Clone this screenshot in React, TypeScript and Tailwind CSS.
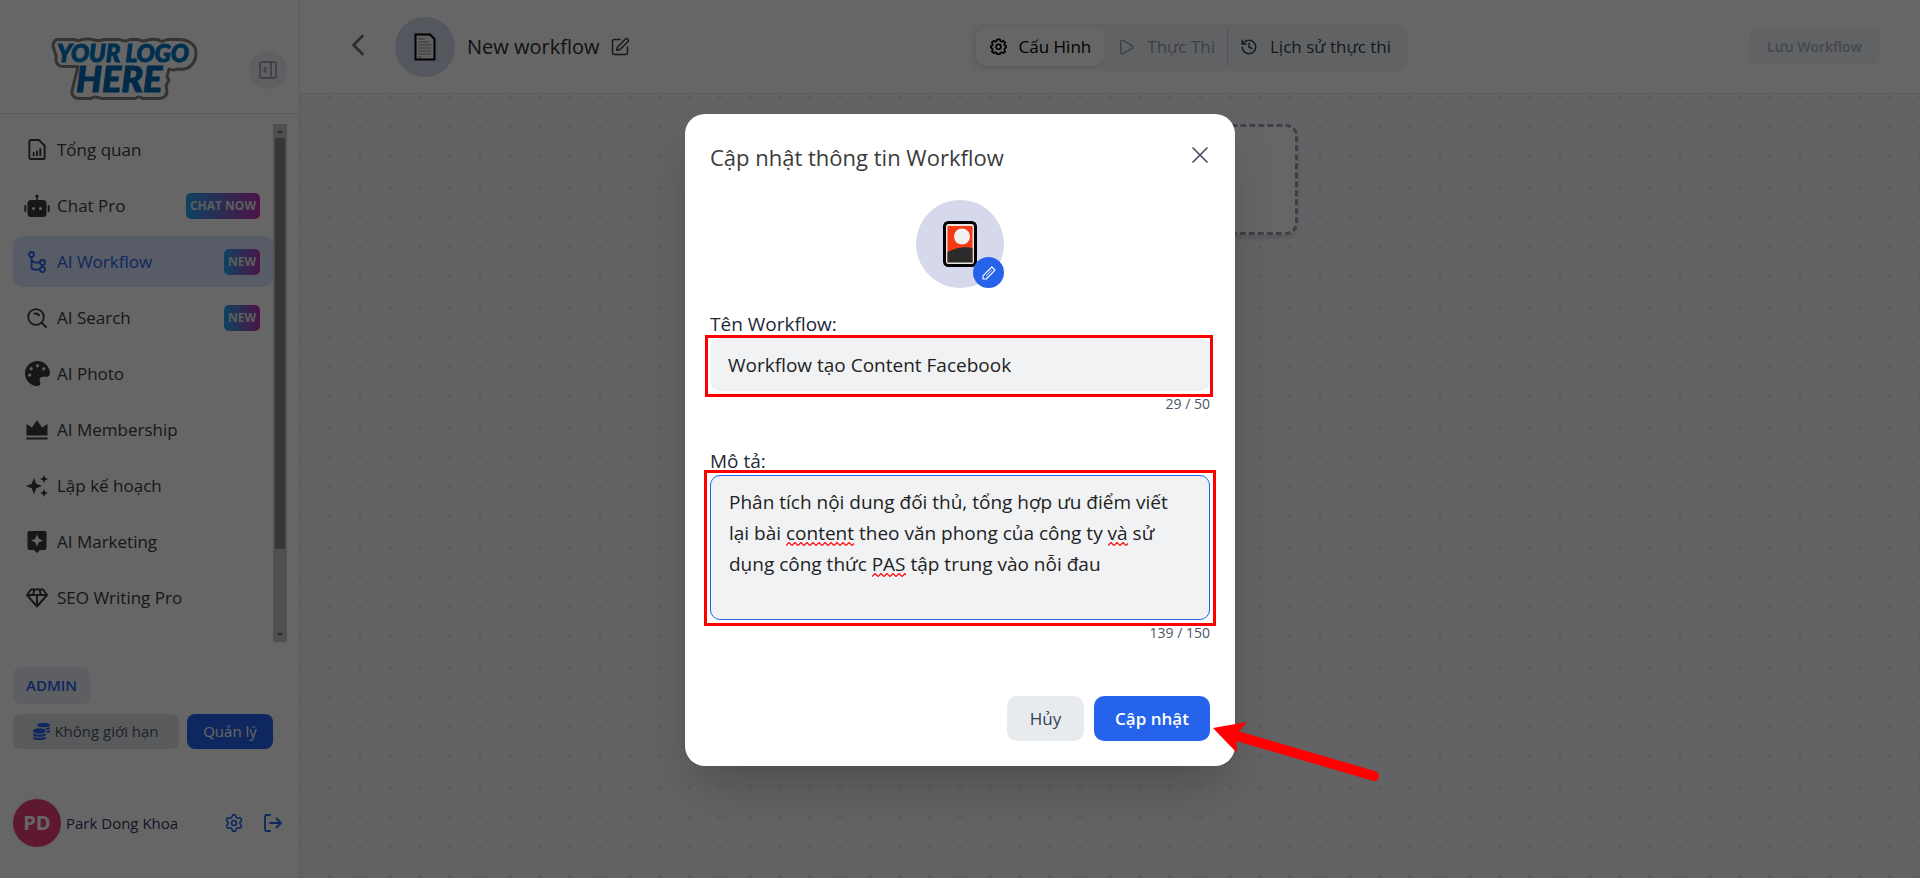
import type { ComponentType, ReactNode } from 'react';
import { useState } from 'react';
import {
  ChevronLeft,
  Play,
  Settings,
  SquarePen,
  X,
} from 'lucide-react';
import { FaCoins, FaPalette } from 'react-icons/fa';
import { LuHistory } from 'react-icons/lu';

type IconProps = { className?: string };

const ReportIcon = ({ className }: IconProps) => (
  <svg viewBox="0 0 18 22" className={className} fill="none" stroke="currentColor" strokeWidth="2" strokeLinejoin="round" strokeLinecap="round">
    <path d="M3 1h8l6 6v12a2 2 0 0 1-2 2H3a2 2 0 0 1-2-2V3a2 2 0 0 1 2-2z" />
    <path d="M5.500 14.500v2.500M9 13v4M12.500 10.500v6.500" />
  </svg>
);

const RobotIcon = ({ className }: IconProps) => (
  <svg viewBox="0 0 26 24" className={className} fill="currentColor" fillRule="evenodd">
    <path d="M7 6h12a3.500 3.500 0 0 1 3.500 3.500v10A3.500 3.500 0 0 1 19 23H7a3.500 3.500 0 0 1-3.500-3.500v-10A3.500 3.500 0 0 1 7 6zM9.500 13a1.500 1.500 0 1 0 0 3 1.500 1.500 0 0 0 0-3zM16.500 13a1.500 1.500 0 1 0 0 3 1.500 1.500 0 0 0 0-3z" />
    <path d="M12.200 3h1.600v4h-1.600z" />
    <circle cx="13" cy="2.200" r="1.600" />
    <rect x=".3" y="11" width="2" height="7" rx="1" />
    <rect x="23.700" y="11" width="2" height="7" rx="1" />
  </svg>
);

const BranchIcon = ({ className }: IconProps) => (
  <svg viewBox="0 0 18 22" className={className} fill="none" stroke="currentColor" strokeWidth="1.8">
    <circle cx="3.500" cy="3.500" r="2.500" />
    <circle cx="14.500" cy="11.500" r="2.500" />
    <circle cx="14.500" cy="18.500" r="2.500" />
    <path d="M3.500 6v9.500a3 3 0 0 0 3 3H12M3.500 7.500a4 4 0 0 0 4 4H12" />
  </svg>
);

const SearchIcon = ({ className }: IconProps) => (
  <svg viewBox="0 0 20 20" className={className} fill="none" stroke="currentColor" strokeWidth="1.8" strokeLinecap="round">
    <circle cx="9" cy="9" r="7.800" />
    <path d="M15 15l4 4M7.500 5.700A4 4 0 0 1 12 7.500" />
  </svg>
);

const CrownIcon = ({ className }: IconProps) => (
  <svg viewBox="0 0 22 20" className={className} fill="currentColor">
    <path d="M.5 4l5.500 3.500L11 0l5 7.500L21.500 4v11.500H.5z" />
    <path d="M.5 17.500h21v2H.5z" />
  </svg>
);

const SparklesIcon = ({ className }: IconProps) => (
  <svg viewBox="0 0 22 22" className={className} fill="currentColor">
    <path d="M8 3l2.300 5.700L16 11l-5.700 2.300L8 19l-2.300-5.700L0 11l5.700-2.300z" />
    <path d="M18 0l1.200 2.800L22 4l-2.800 1.200L18 8l-1.200-2.800L14 4l2.800-1.200zM18 14l1.200 2.800L22 18l-2.800 1.200L18 22l-1.200-2.800L14 18l2.800-1.200z" />
  </svg>
);

const MarketingIcon = ({ className }: IconProps) => (
  <svg viewBox="0 0 20 22" className={className} fill="currentColor" fillRule="evenodd">
    <path d="M2.500 0h15a2 2 0 0 1 2 2v15a2 2 0 0 1-2 2H13l-3 3-3-3H2.500a2 2 0 0 1-2-2V2a2 2 0 0 1 2-2zM10 3.500L8.200 7.700 4 9.500l4.200 1.800L10 15.500l1.800-4.200L16 9.500l-4.200-1.800z" />
  </svg>
);

const DiamondIcon = ({ className }: IconProps) => (
  <svg viewBox="0 0 22 20" className={className} fill="none" stroke="currentColor" strokeWidth="2" strokeLinejoin="round">
    <path d="M5 1.500h12l4 5.500-10 11.500L1 7zM1 7h20M8.500 1.500L7 7M15 7l-1.500-5.500M11 7v11" />
  </svg>
);

const PanelIcon = ({ className }: IconProps) => (
  <svg viewBox="0 0 18 18" className={className} fill="none" stroke="currentColor" strokeWidth="1.800" strokeLinejoin="round" strokeLinecap="round">
    <rect x="1" y="1" width="16" height="16" rx="1.500" />
    <path d="M12 1v16M7 7L5 9l2 2" />
  </svg>
);

const GearIcon = ({ className }: IconProps) => (
  <svg viewBox="0 0 18 18" className={className} fill="none" stroke="currentColor" strokeWidth="1.800" strokeLinejoin="round">
    <path d="M7.500 1.400h3l.5 1.900 1.400.6 1.700-1 2 2-1 1.700.6 1.400 1.300.4v2l-1.300.5-.6 1.500 1 1.700-2 2-1.700-1-1.400.6-.5 1.400h-3L7 15.700l-1.400-.6-1.700 1-2-2 1-1.700-.6-1.500L1 10.400v-2L2.300 8l.6-1.400-1-1.700 2-2 1.700 1L7 3.300z" />
    <circle cx="9" cy="9.300" r="2.600" />
  </svg>
);

const LogoutIcon = ({ className }: IconProps) => (
  <svg viewBox="0 0 18 18" className={className} fill="none" stroke="currentColor" strokeWidth="1.800" strokeLinecap="round" strokeLinejoin="round">
    <path d="M6 1H2.500A1.500 1.500 0 0 0 1 2.500v13A1.500 1.500 0 0 0 2.500 17H6M6 9h11M12.500 4.500L17 9l-4.500 4.500" />
  </svg>
);

const PencilIcon = ({ className }: IconProps) => (
  <svg viewBox="0 0 14 14" className={className} fill="none" stroke="currentColor" strokeWidth="1.200" strokeLinejoin="round" strokeLinecap="round">
    <path d="M1 13V9.800L9.800 1 13 4.200 4.200 13z" />
    <path d="M4.500 9.500l5-5" strokeWidth=".8" />
  </svg>
);

const Logo = () => (
  <svg viewBox="0 0 148 64" className="h-16 w-[148px]" role="img" aria-label="Your logo here">
    <path
      d="M6 2.500h17q4 2 8 0 8-1.500 14 1 4 .5 8-1h16q5 3 10 0h8q5 2.500 10 .5 8-2 14 1.500 6-3 14-2 14-1 19 8 3 10-3 17-5 6-14 4.500-5 2-9 0-1 4-2 8l2 3-3 6 1 5q0 7-8 7.500H92q-4-3-8 0H50q-6-3-10 0H28q-8-.5-7-8l6-24H12q-6 0-7-6V19L2 9q0-5 4-6.500z"
      fill="#fff"
      stroke="#857f78"
      strokeWidth="3"
      strokeLinejoin="round"
    />
    <text fontFamily="Lato, sans-serif" fontWeight="900" fontStyle="italic" strokeWidth="1">
      <tspan x="6" y="25" fontSize="24" fill="#0077c8" stroke="#0077c8">YOUR LOGO</tspan>
      <tspan x="25" y="55" fontSize="36" fill="#0069b4" stroke="#0069b4">HERE</tspan>
    </text>
  </svg>
);

const DocumentIcon = () => (
  <svg viewBox="0 0 22 28" className="h-7 w-[22px]">
    <path d="M1.500 1.500h14.500l4.500 4.500v20.500h-19z" fill="#f0f0f0" stroke="#000" strokeWidth="2" />
    <path d="M4 6h7M4 9h11M4 12h13M4 15h13M4 18h13M4 21h13M4 24h4" stroke="#8a8a8a" strokeWidth="1" />
  </svg>
);

const CardIcon = () => (
  <svg viewBox="0 0 34 46" className="h-[46px] w-[34px]">
    <rect x="1.500" y="1.500" width="31" height="43" rx="4" fill="#e8e4df" stroke="#000" strokeWidth="3" />
    <path d="M4.500 5h25v36h-25z" fill="#f43b16" />
    <path d="M4.500 31c6-3 15-6 25-4v14.500h-25z" fill="#2b2b2b" />
    <circle cx="19" cy="15.500" r="8" fill="#f0f0f0" />
  </svg>
);

interface NavItem {
  label: string;
  icon: ComponentType<IconProps>;
  iconClass: string;
  badge?: string;
  active?: boolean;
}

const navItems: NavItem[] = [
  { label: 'Tổng quan', icon: ReportIcon, iconClass: 'h-[21px] w-[18px]' },
  { label: 'Chat Pro', icon: RobotIcon, iconClass: 'h-6 w-[26px]', badge: 'CHAT NOW' },
  { label: 'AI Workflow', icon: BranchIcon, iconClass: 'h-[22px] w-[18px]', badge: 'NEW', active: true },
  { label: 'AI Search', icon: SearchIcon, iconClass: 'size-5', badge: 'NEW' },
  { label: 'AI Photo', icon: FaPalette, iconClass: 'size-[25px]' },
  { label: 'AI Membership', icon: CrownIcon, iconClass: 'h-5 w-[22px]' },
  { label: 'Lập kế hoạch', icon: SparklesIcon, iconClass: 'size-[22px]' },
  { label: 'AI Marketing', icon: MarketingIcon, iconClass: 'h-[22px] w-5' },
  { label: 'SEO Writing Pro', icon: DiamondIcon, iconClass: 'h-5 w-[22px]' },
];

const Sidebar = () => (
  <aside className="flex w-[300px] shrink-0 flex-col border-r border-[#e3e3e3] bg-white">
    <div className="flex h-[114px] items-end justify-between border-b border-[#e0e0e0] pr-3 pb-3 pl-[51px]">
      <Logo />
      <button aria-label="Thu gọn" className="mb-3 flex size-[38px] items-center justify-center rounded-full bg-[#eff1f6] text-gray-400">
        <PanelIcon className="size-[18px]" />
      </button>
    </div>

    <div className="mt-[10px] mr-3 ml-[13px] flex h-[518px]">
      <nav className="flex flex-1 flex-col gap-[5px]">
        {navItems.map(({ label, icon: Icon, iconClass, badge, active }) => (
          <a
            key={label}
            href="#"
            className={`flex h-[51px] shrink-0 items-center rounded-[10px] pr-[13px] pl-[10px] text-[17px] ${
              active ? 'bg-[#dbe6fe] text-[#2563eb]' : 'text-[#3b3b3b]'
            }`}
          >
            <span className="mr-[6px] flex w-7 justify-center">
              <Icon className={iconClass} />
            </span>
            {label}
            {badge && (
              <span className="ml-auto flex h-[26px] items-center rounded-[5px] bg-linear-to-r/srgb from-[#22a7f0] to-[#c032b0] px-1 text-[12px] font-bold text-gray-200">
                {badge}
              </span>
            )}
          </a>
        ))}
      </nav>
      <div className="flex w-[14px] flex-col items-center justify-between bg-[#c9c9c9] text-[#6b6b6b]">
        <svg viewBox="0 0 14 14" className="size-[14px]" fill="currentColor">
          <path d="M4 9l3-3 3 3z" />
        </svg>
        <div className="mb-[79px] w-[10px] flex-1 bg-[#858585]" />
        <svg viewBox="0 0 14 14" className="size-[14px]" fill="currentColor">
          <path d="M4 5l3 3 3-3z" />
        </svg>
      </div>
    </div>

    <div className="mt-[25px] flex flex-col items-start gap-[10px] px-[13px]">
      <span className="flex h-[37px] items-center rounded-lg bg-[#e9edf8] px-[13px] text-[15px] font-semibold text-[#2563eb]">
        ADMIN
      </span>
      <div className="flex gap-2">
        <div className="flex h-[35px] w-[166px] items-center justify-center gap-1 rounded-lg bg-[#dfe1e4] text-[15px] text-gray-600">
          <FaCoins className="size-[17px] text-[#2563eb]" />
          Không giới hạn
        </div>
        <button className="h-[35px] w-[86px] rounded-lg bg-[#2563eb] text-[15px] text-white">Quản lý</button>
      </div>
    </div>

    <div className="mx-[13px] mt-[50px] flex h-12 items-center rounded-full shadow-[0_0_12px_rgba(0,0,0,0.03)]">
      <div className="flex size-12 items-center justify-center rounded-full bg-[#ec407a] text-xl font-bold text-white">
        PD
      </div>
      <span className="ml-[5px] text-[15px] text-[#33335c]">Park Dong Khoa</span>
      <button aria-label="Cài đặt" className="ml-auto text-[#2563eb]">
        <Settings className="size-5" />
      </button>
      <button aria-label="Đăng xuất" className="ml-5 mr-1 text-[#2563eb]">
        <LogoutIcon className="size-[18px]" />
      </button>
    </div>
  </aside>
);

const Header = () => (
  <header className="flex h-[94px] items-center justify-between border-b border-[#e3e3e3] bg-white pr-10 pl-10">
    <div className="flex items-center">
      <button aria-label="Quay lại" className="mb-1 text-gray-500">
        <ChevronLeft className="size-9" strokeWidth={1.800} />
      </button>
      <div className="ml-[19px] flex size-[60px] items-center justify-center rounded-full bg-[#d5d9eb]">
        <DocumentIcon />
      </div>
      <h1 className="ml-3 text-[20px] font-medium text-[#2b2b2b]">New workflow</h1>
      <button aria-label="Sửa tên" className="ml-[10px] text-[#3b3b3b]">
        <SquarePen className="size-5" strokeWidth={1.750} />
      </button>
    </div>

    <div className="flex h-12 items-center rounded-xl bg-[#f1f5f9] p-[5px] text-[17px]">
      <button className="flex h-[38px] items-center gap-3 rounded-[10px] bg-white px-[14px] text-black shadow-sm">
        <GearIcon className="size-[17px]" />
        Cấu Hình
      </button>
      <button className="flex h-[38px] items-center gap-3 px-3 text-gray-400" disabled>
        <Play className="size-[18px]" strokeWidth={2} />
        Thực Thi
      </button>
      <button className="flex h-[38px] items-center gap-3 border-l border-gray-300 px-3 text-gray-700">
        <LuHistory className="size-[18px]" />
        Lịch sử thực thi
      </button>
    </div>

    <button className="h-[37px] rounded-[10px] bg-[#f1f5f9] px-[18px] text-[14px] font-semibold text-[#adb4c0]" disabled>
      Lưu Workflow
    </button>
  </header>
);

const Canvas = () => (
  <main className="flex flex-1 justify-center bg-[#f8f8fc] bg-[radial-gradient(#e5e7eb_2px,transparent_2px)] bg-size-[30px_30px] bg-position-[-15px_-12px] pt-[30px]">
    <div className="h-[111px] w-[376px] rounded-xl border-3 border-dashed border-gray-400 bg-white shadow-md" />
  </main>
);

const Squiggle = ({ className }: IconProps) => (
  <svg className={`pointer-events-none absolute h-1 ${className}`} aria-hidden="true">
    <defs>
      <pattern id="wave" width="6" height="4" patternUnits="userSpaceOnUse">
        <path d="M0 3.500L3 .5 6 3.500" fill="none" stroke="#f00" strokeWidth="1.200" />
      </pattern>
    </defs>
    <rect width="100%" height="4" fill="url(#wave)" />
  </svg>
);

interface FieldProps {
  id: string;
  label: string;
  counter: string;
  children: ReactNode;
}

const Field = ({ id, label, counter, children }: FieldProps) => (
  <div className="flex flex-col">
    <label htmlFor={id} className="text-[19px] leading-7 font-medium text-gray-800">
      {label}
    </label>
    <div className="relative flex">{children}</div>
    <span className="mt-[3px] text-right text-[14px] leading-5 text-gray-600">{counter}</span>
  </div>
);

const UpdateDialog = () => {
  const [name, setName] = useState('Workflow tạo Content Facebook');
  const [description, setDescription] = useState(
    'Phân tích nội dung đối thủ, tổng hợp ưu điểm viết lại bài content theo văn phong của công ty và sử dụng công thức PAS tập trung vào nỗi đau',
  );

  return (
    <div
      role="dialog"
      aria-modal="true"
      aria-labelledby="dialog-title"
      className="relative w-[550px] rounded-[20px] bg-white p-[25px] shadow-2xl"
    >
      <div className="flex h-9 items-center justify-between">
        <h2 id="dialog-title" className="text-[22px] font-medium text-[#3b3b3b]">
          Cập nhật thông tin Workflow
        </h2>
        <button aria-label="Đóng" className="-mr-1 mb-1 text-gray-600">
          <X className="size-7" strokeWidth={1.500} />
        </button>
      </div>

      <div className="relative mx-auto mt-[25px] flex size-[88px] items-center justify-center rounded-full bg-[#d6d8ec]">
        <CardIcon />
        <button aria-label="Đổi biểu tượng" className="absolute right-0 bottom-0 flex size-[31px] items-center justify-center rounded-full bg-[#2563eb] text-white">
          <PencilIcon className="size-[14px]" />
        </button>
      </div>

      <div className="mt-[22px] flex flex-col gap-[33px]">
        <Field id="name" label="Tên Workflow:" counter="29 / 50">
          <input
            id="name"
            value={name}
            onChange={(e) => setName(e.target.value)}
            className="h-[53px] w-full rounded-[10px] bg-[#f1f2f4] px-[18px] text-[19px] text-[#222] outline-none"
          />
          <div className="pointer-events-none absolute -top-[3px] -right-[3px] -bottom-[6px] -left-[5px] border-3 border-[#f00]" />
        </Field>

        <Field id="description" label="Mô tả:" counter="139 / 150">
          <textarea
            id="description"
            spellCheck={false}
            value={description}
            onChange={(e) => setDescription(e.target.value)}
            className="h-[145px] w-full resize-none rounded-[10px] border border-[#2563eb] bg-[#f1f2f4] py-[11px] pr-6 pl-[18px] text-[19px] leading-[31px] text-[#222] outline-none"
          />
          <Squiggle className="top-[67px] left-[76px] w-[68px]" />
          <Squiggle className="top-[67px] left-[398px] w-5" />
          <Squiggle className="top-[98px] left-[162px] w-[34px]" />
          <div className="pointer-events-none absolute -top-[5px] -right-[6px] -bottom-[6px] -left-[6px] border-3 border-[#f00]" />
        </Field>
      </div>

      <div className="mt-[53px] flex justify-end gap-[10px] text-[17px]">
        <button className="h-[45px] w-[77px] rounded-[10px] bg-[#e8ebee] text-slate-700">Hủy</button>
        <button className="h-[45px] w-[116px] rounded-[10px] bg-[#2563eb] font-semibold text-white">Cập nhật</button>
      </div>

      <svg viewBox="0 0 170 64" className="pointer-events-none absolute -right-[148px] -bottom-5 h-16 w-[170px]" fill="#f00">
        <path d="M24 14L161 54" stroke="#f00" strokeWidth="10" strokeLinecap="round" />
        <path d="M0 6L34 0 23 13 24 31z" />
      </svg>
    </div>
  );
};

export default function App() {
  return (
    <div className="relative flex min-h-screen overflow-hidden font-['Open_Sans','Noto_Sans',sans-serif]">
      <Sidebar />
      <div className="flex flex-1 flex-col">
        <Header />
        <Canvas />
      </div>
      <div className="absolute inset-0 flex items-center justify-center bg-black/60 pt-[2px]">
        <UpdateDialog />
      </div>
    </div>
  );
}
